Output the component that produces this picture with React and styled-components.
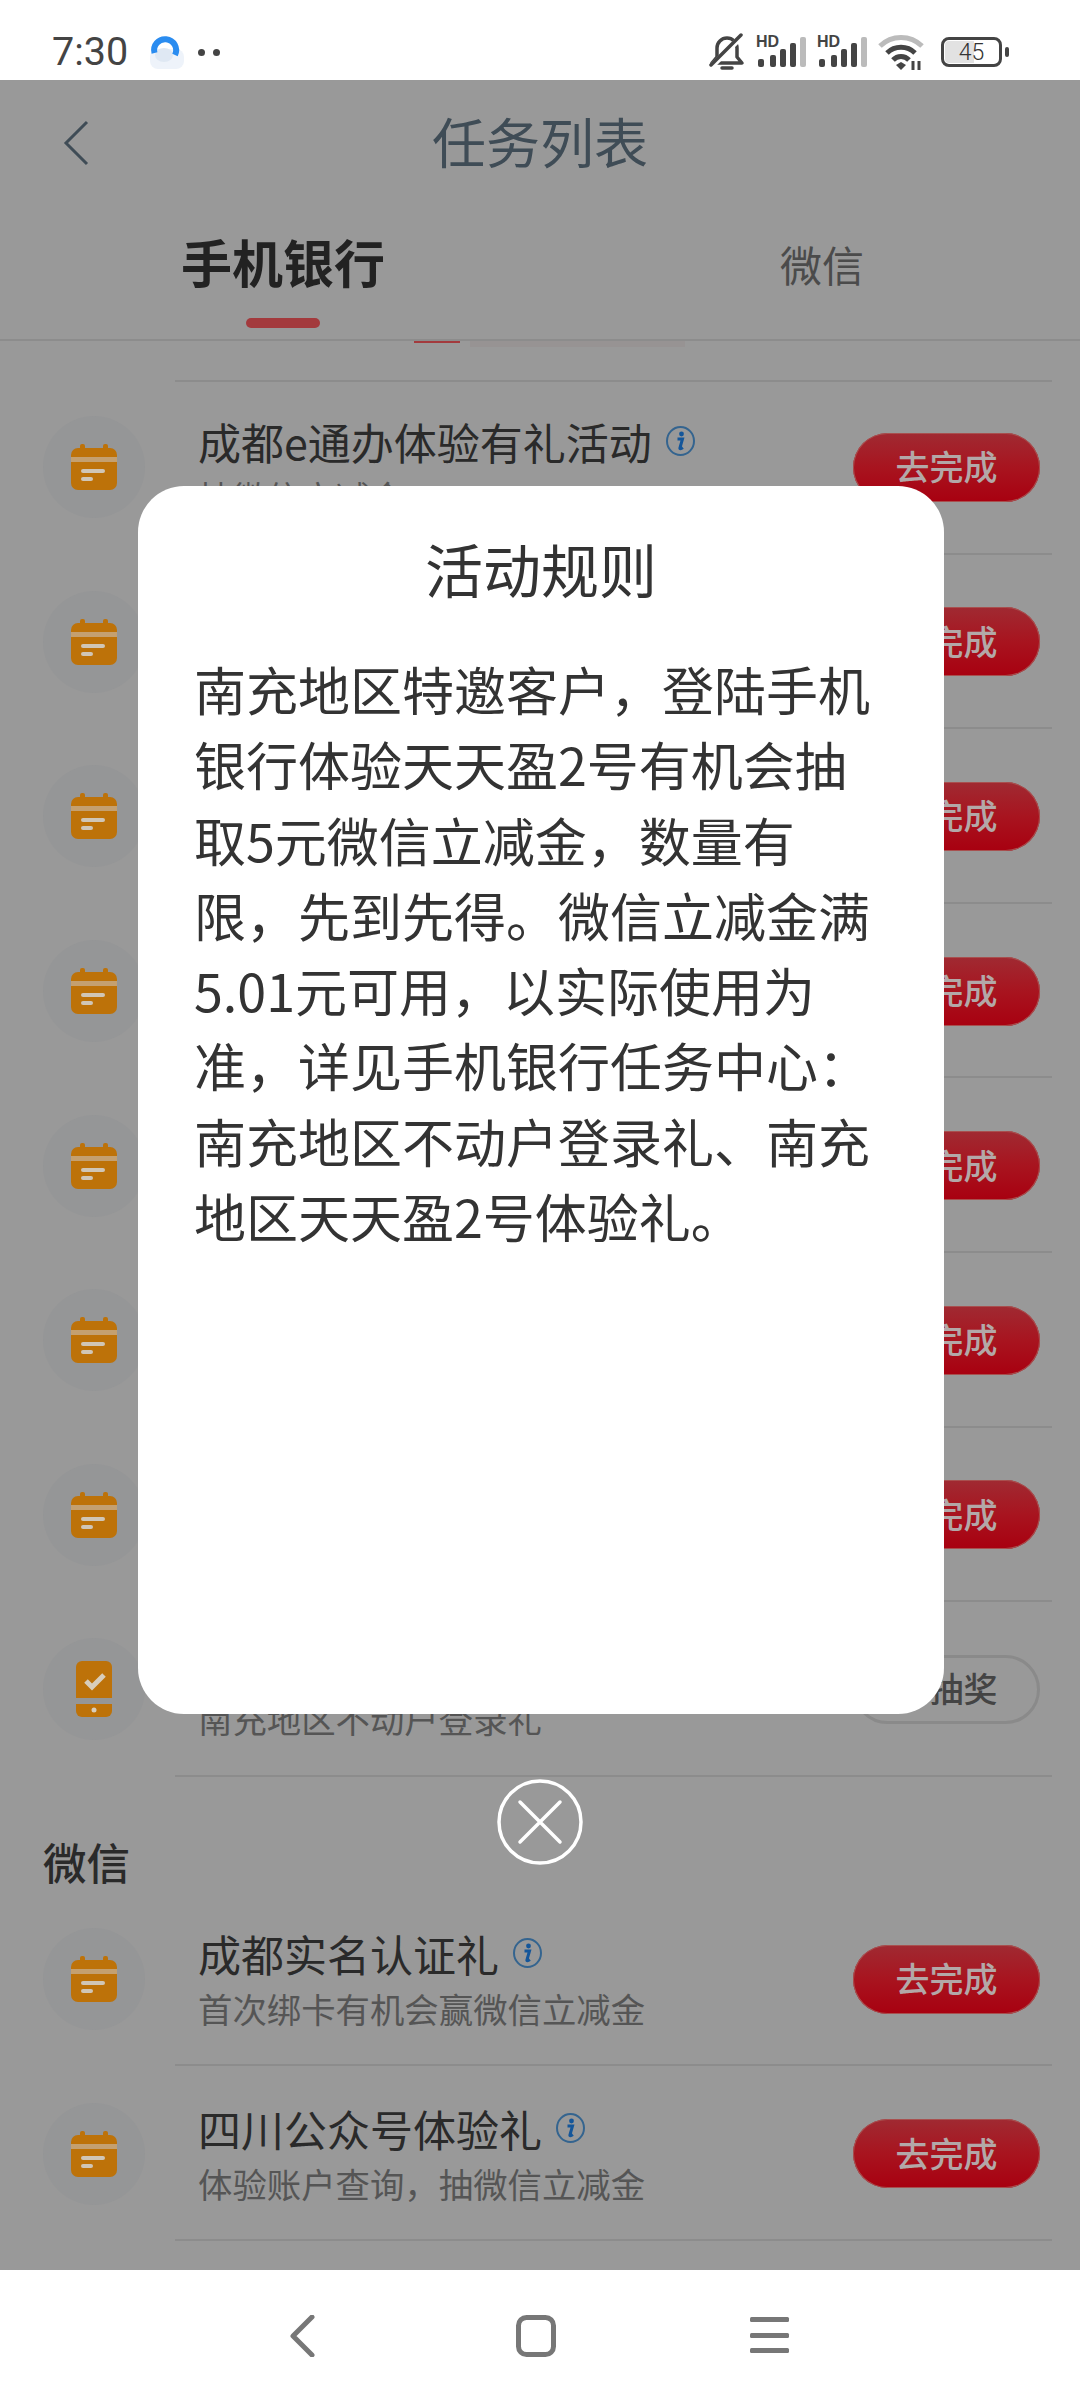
import React from "react";
import styled, { createGlobalStyle } from "styled-components";

const GlobalStyle = createGlobalStyle`
  html, body {
    margin: 0;
    padding: 0;
    background: #fff;
  }
  * {
    box-sizing: border-box;
  }
  body {
    font-family: "Noto Sans CJK SC", "Noto Sans", sans-serif;
  }
`;

const Screen = styled.div`
  width: 1080px;
  height: 2400px;
  display: flex;
  flex-direction: column;
  overflow: hidden;
`;

const StatusBar = styled.div`
  height: 80px;
  flex: none;
  background: #fff;
  display: flex;
  align-items: center;
  padding: 24px 78px 0 52px;
`;

const Clock = styled.span`
  font-family: Roboto, sans-serif;
  font-size: 39.5px;
  color: #444;
  line-height: 1;
`;

const StatusLeft = styled.div`
  display: flex;
  align-items: center;
  gap: 21px;
  flex: 1;
`;

const Dots = styled.div`
  display: flex;
  gap: 8px;
  margin-left: -8px;
`;

const Dot = styled.i`
  width: 7px;
  height: 7px;
  border-radius: 50%;
  background: #444;
`;

const StatusIcons = styled.div`
  display: flex;
  align-items: center;
  gap: 11px;
`;

const Signal = styled.div`
  width: 50px;
  height: 34px;
  position: relative;
  display: flex;
`;

const SignalLabel = styled.span`
  position: absolute;
  left: 0;
  top: 0;
  font-family: "Liberation Sans", sans-serif;
  font-size: 16px;
  line-height: 14px;
  font-weight: 700;
  color: #444;
`;

const Battery = styled.div`
  width: 61px;
  height: 30px;
  border: 3px solid #444;
  border-radius: 8px;
  display: flex;
  align-items: center;
  justify-content: center;
  position: relative;
  margin-left: 6px;
  font-family: Roboto, sans-serif;
  font-size: 23px;
  font-weight: 300;
  color: #333;
  background: linear-gradient(90deg, #e2e2e2 0 55%, #fff 55%);
  background-clip: content-box;
  padding: 1px;

  &::after {
    content: "";
    position: absolute;
    right: -10px;
    top: 7px;
    width: 4px;
    height: 10px;
    border-radius: 2px;
    background: #444;
  }
`;

const Page = styled.div`
  flex: 1;
  position: relative;
  overflow: hidden;
  background: #999;
  display: flex;
  flex-direction: column;
`;

const Header = styled.div`
  height: 124px;
  flex: none;
  position: relative;
  display: flex;
  align-items: center;
  justify-content: center;
  padding-bottom: 3px;
`;

const BackButton = styled.div`
  position: absolute;
  left: 63px;
  top: 40px;
  display: flex;
`;

const Title = styled.h1`
  margin: 0;
  font-size: 54px;
  font-weight: 400;
  color: #3f4c56;
  line-height: 1;
`;

const Tabs = styled.div`
  height: 137px;
  flex: none;
  display: flex;
  border-bottom: 2px solid #8c8c8c;
  padding-left: 181px;
`;

const Tab = styled.div`
  position: relative;
  width: ${(p) => (p.$active ? "599px" : "auto")};
  padding-top: ${(p) => (p.$active ? "21px" : "24px")};
  font-size: ${(p) => (p.$active ? "51px" : "42px")};
  font-weight: ${(p) => (p.$active ? 700 : 400)};
  color: ${(p) => (p.$active ? "#222" : "#4b4b4b")};
  line-height: 72px;
`;

const TabMark = styled.div`
  position: absolute;
  left: 65px;
  top: 114px;
  width: 74px;
  height: 10px;
  border-radius: 5px;
  background: #a33a3d;
`;

const Remnant = styled.div`
  height: 39px;
  flex: none;
  display: flex;
  gap: 10px;
  padding-left: 414px;
  align-items: flex-start;
`;

const RemnantBar = styled.div`
  width: ${(p) => p.$width}px;
  height: ${(p) => p.$height}px;
  background: ${(p) => p.$color};
`;

const TopRule = styled.div`
  height: 2px;
  flex: none;
  margin: 0 28px -2px 175px;
  background: #8c8c8c;
`;

const List = styled.div`
  display: flex;
  flex-direction: column;
`;

const Row = styled.div`
  height: 174.6px;
  margin-left: 43px;
  margin-right: 28px;
  display: flex;
  align-items: center;
  position: relative;
  padding-right: 12px;

  &::after {
    content: "";
    position: absolute;
    left: 132px;
    right: 0;
    bottom: 0;
    height: 2px;
    background: #8c8c8c;
  }
`;

const IconCircle = styled.div`
  width: 102px;
  height: 102px;
  flex: none;
  border-radius: 50%;
  background: #959697;
  display: flex;
  align-items: center;
  justify-content: center;
  margin-right: 53px;
`;

const RowText = styled.div`
  flex: 1;
  display: flex;
  flex-direction: column;
  gap: 2px;
`;

const RowTitle = styled.div`
  display: flex;
  align-items: center;
  gap: 14px;
  min-height: 56px;
  font-size: 43px;
  line-height: 56px;
  color: #2a2a2a;
`;

const RowSub = styled.div`
  font-size: 34.4px;
  line-height: 50px;
  color: #555;
`;

const ActionButton = styled.div`
  width: 187px;
  height: 69px;
  flex: none;
  border-radius: 35px;
  display: flex;
  align-items: center;
  justify-content: center;
  padding-bottom: 3px;
  font-size: 34px;
  font-weight: 500;
  ${(p) =>
    p.$outline
      ? `
    border: 3px solid #8a8a8a;
    color: #444;
  `
      : `
    background: linear-gradient(180deg, #a02a32 0%, #a8141f 50%, #a80010 100%);
    box-shadow: inset 0 0 0 1px #a8504f;
    color: #b3a8a8;
  `}
`;

const SectionTitle = styled.div`
  margin: 60px 0 0 43px;
  height: 50px;
  font-size: 43.5px;
  line-height: 50px;
  font-weight: 500;
  color: #2a2a2a;
`;

const SectionList = styled(List)`
  margin-top: 5px;
`;

const Modal = styled.div`
  position: absolute;
  left: 138px;
  top: 406px;
  width: 806px;
  height: 1228px;
  background: #fff;
  border-radius: 46px;
  padding: 46px 58px;
`;

const ModalTitle = styled.h2`
  margin: 0 0 47px;
  text-align: center;
  font-size: 58px;
  line-height: 72px;
  font-weight: 400;
  color: #333;
`;

const ModalBody = styled.p`
  margin: 0 0 0 -2px;
  font-size: 52px;
  line-height: 75.3px;
  color: #333;
`;

const CloseButton = styled.div`
  position: absolute;
  left: 497px;
  top: 1699px;
  display: flex;
`;

const BottomNav = styled.div`
  height: 130px;
  flex: none;
  background: #fff;
  display: flex;
  align-items: flex-start;
  padding: 45px 0 0 289px;
  gap: 194px;
`;

const NavBack = styled.svg`
  margin-right: 7px;
`;

const CalendarIcon = () => (
  <svg width="46" height="46" viewBox="0 0 46 46">
    <rect x="9" y="0" width="5" height="8" rx="2" fill="#bd7209" />
    <rect x="32" y="0" width="5" height="8" rx="2" fill="#bd7209" />
    <rect x="0" y="4" width="46" height="42" rx="7" fill="#bd7209" />
    <rect x="0" y="13" width="46" height="5" fill="#c4a070" />
    <rect x="10" y="25" width="24" height="4" rx="2" fill="#d0c6b6" />
    <rect x="10" y="33" width="12" height="4" rx="2" fill="#d0c6b6" />
  </svg>
);

const PhoneIcon = () => (
  <svg width="36" height="56" viewBox="0 0 36 56">
    <path d="M0 37V6a6 6 0 0 1 6-6h24a6 6 0 0 1 6 6v31z" fill="#bd7209" />
    <path d="M0 43h36v7a6 6 0 0 1-6 6H6a6 6 0 0 1-6-6z" fill="#bd7209" />
    <path d="M10 20l6 6 12-12" fill="none" stroke="#d8cdbb" strokeWidth="5" />
    <circle cx="18" cy="49" r="2.5" fill="#d8cdbb" />
  </svg>
);

const InfoIcon = () => (
  <svg width="29" height="30" viewBox="0 0 29 30">
    <ellipse cx="14.5" cy="15" rx="13.5" ry="14" fill="none" stroke="#34648f" strokeWidth="2" />
    <circle cx="15.5" cy="8" r="2.4" fill="#14569a" />
    <path d="M11.5 13h5l-2.6 9c-.2 1 .8 1.2 3-.4" fill="none" stroke="#14569a" strokeWidth="3" />
  </svg>
);

const SignalIcon = () => (
  <Signal>
    <SignalLabel>HD</SignalLabel>
    <svg width="50" height="34" viewBox="0 0 50 34">
      <rect x="2" y="24" width="6" height="8" rx="2" fill="#444" />
      <rect x="14" y="20" width="6" height="12" rx="2" fill="#444" />
      <rect x="24" y="14" width="6" height="18" rx="2" fill="#444" />
      <rect x="34" y="8" width="6" height="24" rx="2" fill="#444" />
      <rect x="44" y="2" width="6" height="30" rx="2" fill="#bbb" />
    </svg>
  </Signal>
);

const tasks = [
  { title: "成都e通办体验有礼活动", sub: "抽微信立减金", info: true },
  { title: "", sub: "" },
  { title: "", sub: "" },
  { title: "", sub: "" },
  { title: "", sub: "" },
  { title: "", sub: "" },
  { title: "", sub: "" },
  { title: "", sub: "南充地区不动户登录礼", phone: true, outline: true, label: "去抽奖" },
];

const wechatTasks = [
  { title: "成都实名认证礼", sub: "首次绑卡有机会赢微信立减金", info: true },
  { title: "四川公众号体验礼", sub: "体验账户查询，抽微信立减金", info: true },
];

function TaskRow({ task }) {
  return (
    <Row>
      <IconCircle>{task.phone ? <PhoneIcon /> : <CalendarIcon />}</IconCircle>
      <RowText>
        <RowTitle>
          {task.title}
          {task.info && <InfoIcon />}
        </RowTitle>
        <RowSub>{task.sub}</RowSub>
      </RowText>
      <ActionButton $outline={task.outline}>{task.label || "去完成"}</ActionButton>
    </Row>
  );
}

export default function App() {
  return (
    <Screen>
      <GlobalStyle />
      <StatusBar>
        <StatusLeft>
          <Clock>7:30</Clock>
          <svg width="36" height="34" viewBox="0 0 36 34">
            <rect x="1" y="14" width="34" height="20" rx="8" fill="#eef3fa" />
            <ellipse cx="15" cy="20" rx="9" ry="7" fill="#dfe8f3" />
            <path d="M5.5 18A11 11 0 1 1 26 20" fill="none" stroke="#2a8cf0" strokeWidth="6" />
          </svg>
          <Dots>
            <Dot />
            <Dot />
          </Dots>
        </StatusLeft>
        <StatusIcons>
          <svg width="36" height="38" viewBox="0 0 36 38">
            <path d="M8 24V15a10 10 0 0 1 20 0v9l5 6H3z" fill="none" stroke="#444" strokeWidth="3.5" strokeLinejoin="round" />
            <path d="M13 35h10" stroke="#444" strokeWidth="3.5" strokeLinecap="round" />
            <path d="M4 32L33 3" stroke="#fff" strokeWidth="6" />
            <path d="M2 32L32 2" stroke="#444" strokeWidth="3.5" strokeLinecap="round" />
          </svg>
          <SignalIcon />
          <SignalIcon />
          <svg width="46" height="36" viewBox="0 0 46 36">
            <path d="M2 12a30 30 0 0 1 42 0" fill="none" stroke="#bbb" strokeWidth="5" />
            <path d="M9 19a20 20 0 0 1 28 0" fill="none" stroke="#444" strokeWidth="5" />
            <path d="M15 26a11 11 0 0 1 16 0" fill="none" stroke="#444" strokeWidth="5" />
            <path d="M23 36l-5-5 5-3 5 3z" fill="#444" />
            <path d="M35 27v9M41 27v9" stroke="#444" strokeWidth="3" />
          </svg>
          <Battery>45</Battery>
        </StatusIcons>
      </StatusBar>

      <Page>
        <Header>
          <BackButton>
            <svg width="26" height="46" viewBox="0 0 26 46">
              <path d="M24 2L3 23l21 21" fill="none" stroke="#3f4c56" strokeWidth="3" />
            </svg>
          </BackButton>
          <Title>任务列表</Title>
        </Header>
        <Tabs>
          <Tab $active>
            手机银行
            <TabMark />
          </Tab>
          <Tab>微信</Tab>
        </Tabs>
        <Remnant>
          <RemnantBar $width={46} $height={2} $color="#a33a3d" />
          <RemnantBar $width={215} $height={6} $color="#979393" />
        </Remnant>
        <TopRule />
        <List>
          {tasks.map((task, i) => (
            <TaskRow key={i} task={task} />
          ))}
        </List>
        <SectionTitle>微信</SectionTitle>
        <SectionList>
          {wechatTasks.map((task) => (
            <TaskRow key={task.title} task={task} />
          ))}
        </SectionList>
        <Modal>
          <ModalTitle>活动规则</ModalTitle>
          <ModalBody>
            南充地区特邀客户，登陆手机银行体验天天盈2号有机会抽取5元微信立减金，数量有限，先到先得。微信立减金满5.01元可用，以实际使用为准，详见手机银行任务中心：南充地区不动户登录礼、南充地区天天盈2号体验礼。
          </ModalBody>
        </Modal>
        <CloseButton>
          <svg width="86" height="86" viewBox="0 0 86 86">
            <circle cx="43" cy="43" r="41" fill="none" stroke="#fff" strokeWidth="3.5" />
            <path d="M23 23l40 40M63 23L23 63" stroke="#fff" strokeWidth="3.5" strokeLinecap="round" />
          </svg>
        </CloseButton>
      </Page>

      <BottomNav>
        <NavBack width="26" height="42" viewBox="0 0 26 42">
          <path d="M23 2L4 21l19 19" fill="none" stroke="#777" strokeWidth="5" strokeLinecap="round" strokeLinejoin="round" />
        </NavBack>
        <svg width="40" height="42" viewBox="0 0 40 42">
          <rect x="2.5" y="2.5" width="35" height="37" rx="8" fill="none" stroke="#777" strokeWidth="5" />
        </svg>
        <svg width="40" height="40" viewBox="0 0 40 40">
          <rect x="0" y="2" width="39" height="5" rx="1.5" fill="#777" />
          <rect x="0" y="18" width="39" height="5" rx="1.5" fill="#777" />
          <rect x="0" y="33" width="39" height="5" rx="1.5" fill="#777" />
        </svg>
      </BottomNav>
    </Screen>
  );
}
